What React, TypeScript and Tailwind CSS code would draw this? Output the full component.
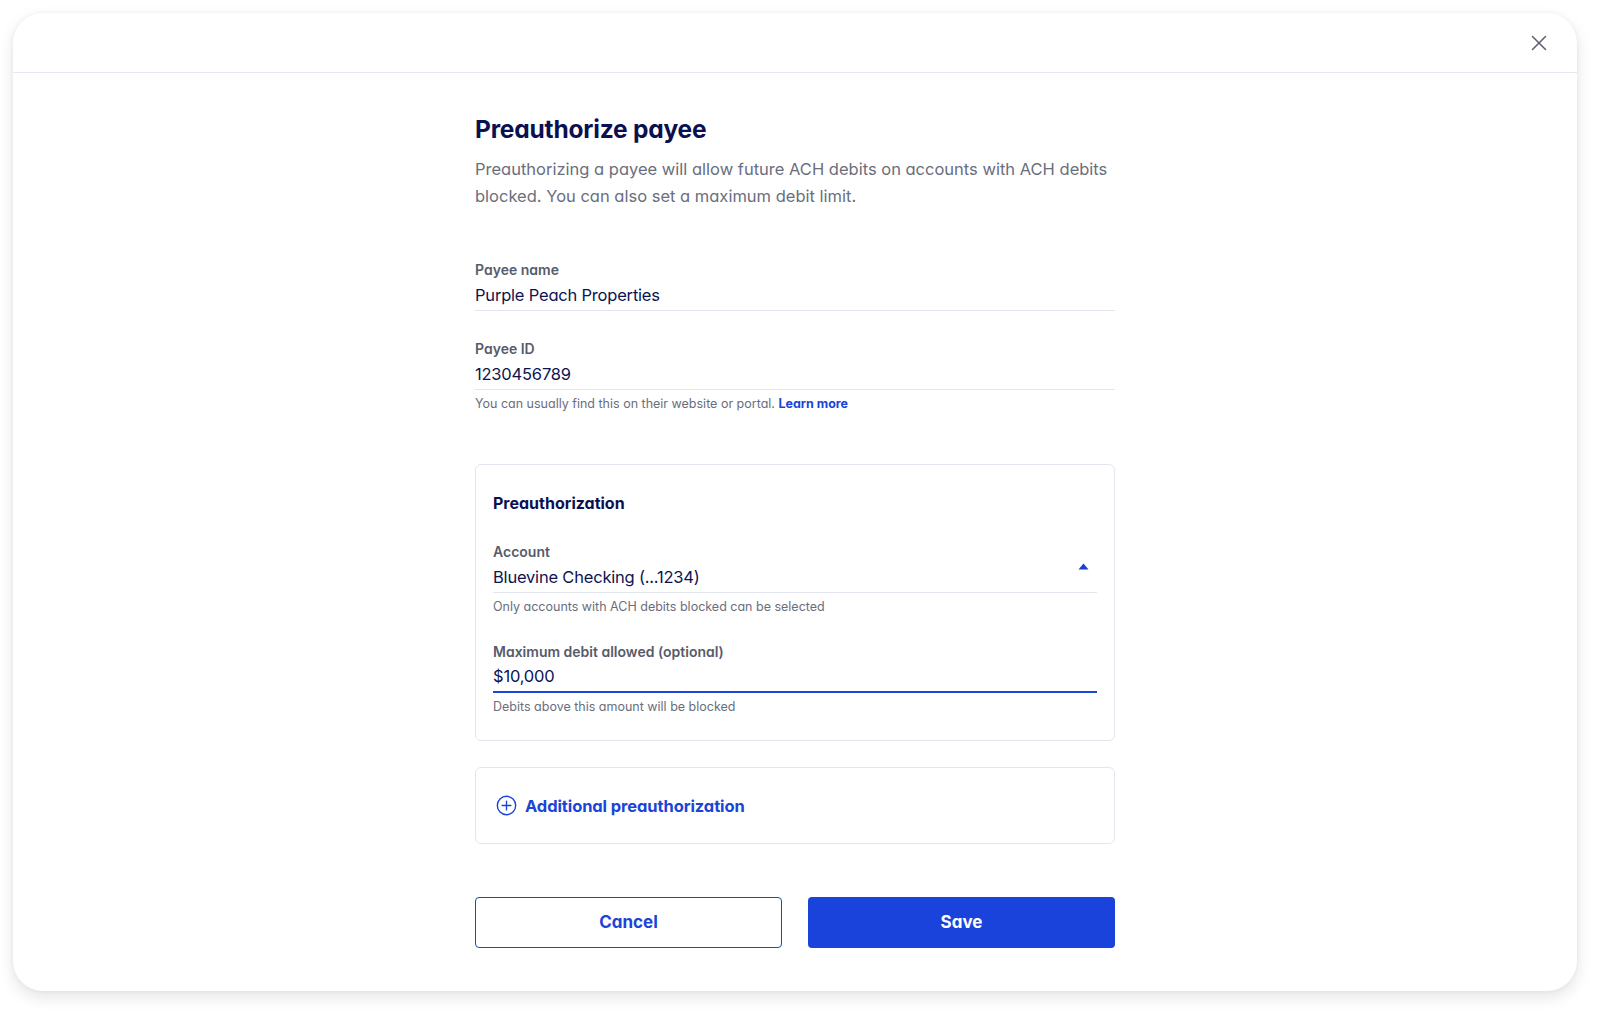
import { X } from 'lucide-react'

const font = "font-['Inter','Liberation_Sans',sans-serif] [font-feature-settings:'cv11']"

function Field({ label, value, helper, active }: { label: string; value: string; helper?: React.ReactNode; active?: boolean }) {
  return (
    <div>
      <div className="text-[14px] leading-[20px] font-semibold text-[#575b6b]">{label}</div>
      <div className={active ? 'mt-[1px] border-b-2 border-[#1b44d8] pb-[2px]' : 'mt-[2px] border-b border-[#e2e7ef] pb-[2px]'}>
        <div className="text-[16.5px] leading-[26px] tracking-[-0.2px] text-[#0d1450]">{value}</div>
      </div>
      {helper && <div className="mt-[5px] text-[12.5px] leading-[18px] text-[#6a6e7c]">{helper}</div>}
    </div>
  )
}

export default function App() {
  return (
    <div className={`h-[1013px] w-full bg-white pt-[13px] pl-[13px] ${font}`}>
      <div className="flex h-[978px] w-[1564px] flex-col rounded-[30px] bg-white shadow-[0_6px_16px_rgba(0,0,0,0.11),0_0_4px_rgba(0,0,0,0.05)]">
        <div className="flex h-[60px] shrink-0 items-center justify-end border-b border-[#e4e9f1] pr-[25px]">
          <button type="button" className="flex h-[26px] w-[26px] shrink-0 items-center justify-center text-[#5c6071]">
            <X size={26} strokeWidth={1.4} className="shrink-0" />
          </button>
        </div>

        <div className="mx-auto w-[640px] pt-[40px]">
          <h1 className="text-[24.5px] leading-[32px] font-bold tracking-[-0.2px] text-[#0b1150]">Preauthorize payee</h1>
          <p className="mt-[11px] text-[16.5px] leading-[27px] text-[#6a6e7d]">
            Preauthorizing a payee will allow future ACH debits on accounts with ACH debits blocked. You can also set a maximum debit limit.
          </p>

          <div className="mt-[50px]">
            <Field label="Payee name" value="Purple Peach Properties" />
          </div>
          <div className="mt-[28px]">
            <Field
              label="Payee ID"
              value="1230456789"
              helper={
                <>
                  You can usually find this on their website or portal.{' '}
                  <a className="font-bold text-[#1b44d8]">Learn more</a>
                </>
              }
            />
          </div>

          <div className="mt-[51px] rounded-[6px] border border-[#e2e7ef] px-[17px] pt-[26px] pb-[24px]">
            <h2 className="text-[16px] leading-[24px] font-bold text-[#0b1150]">Preauthorization</h2>
            <div className="relative mt-[27px]">
              <Field label="Account" value="Bluevine Checking (...1234)" helper="Only accounts with ACH debits blocked can be selected" />
              <svg className="absolute top-[21px] right-[8px]" width="11" height="7" viewBox="0 0 11 7">
                <path d="M5.5 0.5 L10.5 6.5 L0.5 6.5 Z" fill="#1b3fd6" />
              </svg>
            </div>
            <div className="mt-[26px]">
              <Field label="Maximum debit allowed (optional)" value="$10,000" helper="Debits above this amount will be blocked" active />
            </div>
          </div>

          <div className="mt-[26px] flex h-[77px] items-center gap-[8px] rounded-[6px] border border-[#e2e7ef] pl-[20px]">
            <svg width="21" height="21" viewBox="0 0 24 24" fill="none" stroke="#1b44d8" strokeWidth="1.6" strokeLinecap="round">
              <circle cx="12" cy="12" r="10.5" />
              <path d="M12 7v10M7 12h10" />
            </svg>
            <span className="text-[16.5px] leading-[26px] font-bold tracking-[-0.1px] text-[#1b44d8]">Additional preauthorization</span>
          </div>

          <div className="mt-[53px] grid grid-cols-2 gap-[26px]">
            <button type="button" className="h-[51px] rounded-[4px] border border-[#1b44d8] bg-white text-[17px] font-bold text-[#1b44d8]">
              Cancel
            </button>
            <button type="button" className="h-[51px] rounded-[4px] bg-[#1a43dc] text-[17px] font-bold text-white">
              Save
            </button>
          </div>
        </div>
      </div>
    </div>
  )
}
